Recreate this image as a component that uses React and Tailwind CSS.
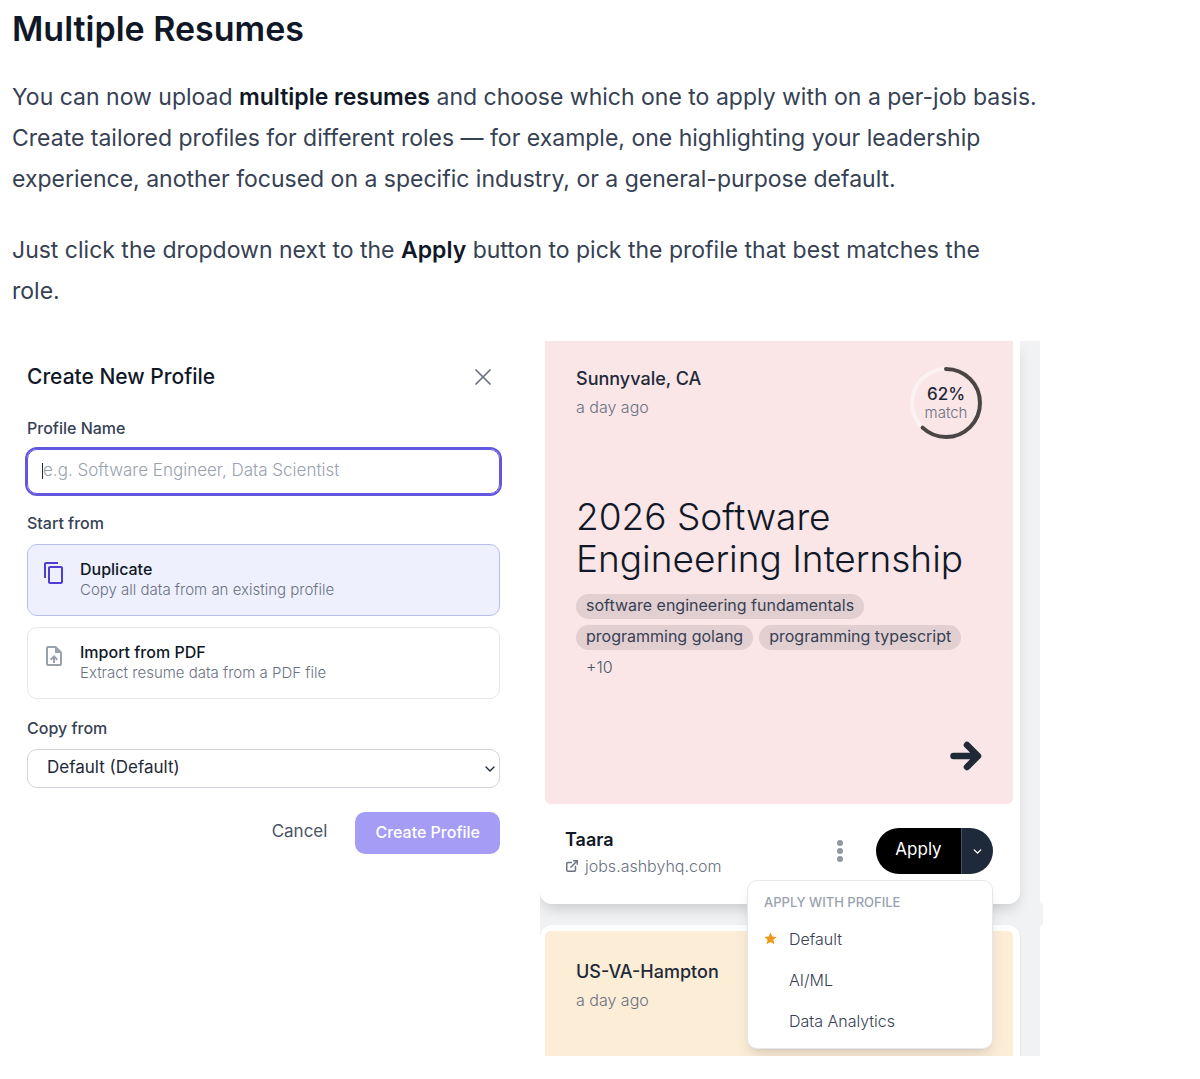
import React, { useState } from 'react';
import { X, ChevronDown, ExternalLink } from 'lucide-react';
import { MdContentCopy, MdOutlineUploadFile } from 'react-icons/md';

const profiles = ['Default', 'AI/ML', 'Data Analytics'];
const skills = ['software engineering fundamentals', 'programming golang', 'programming typescript'];

const OptionCard = ({ icon, title, text, active, onClick }) => (
  <button
    type="button"
    aria-pressed={active}
    onClick={onClick}
    className={`flex w-full items-start gap-[14px] rounded-[10px] border px-[14px] pt-[13px] pb-[15px] text-left ${active ? 'border-[#b9bdf0] bg-[#eef0fd]' : 'border-gray-200 bg-white'}`}
  >
    <span className={`mt-[3px] ${active ? 'text-[#4f3fd0]' : 'text-gray-400'}`}>{icon}</span>
    <span className="flex flex-col">
      <span className="text-[16px] leading-[22px] font-medium text-gray-900">{title}</span>
      <span className="text-[15px] leading-5 font-light text-gray-500">{text}</span>
    </span>
  </button>
);

const CreateProfileForm = () => {
  const [name, setName] = useState('');
  const [source, setSource] = useState('duplicate');

  return (
    <form className="px-[15px] pt-[22px]" onSubmit={(e) => e.preventDefault()}>
      <div className="flex items-center justify-between pr-[3px]">
        <h2 className="text-[21px] leading-7 font-medium text-gray-900">Create New Profile</h2>
        <button type="button" aria-label="Close" className="text-gray-500">
          <X size={28} strokeWidth={1.5} />
        </button>
      </div>

      <label htmlFor="profile-name" className="mt-[25px] block text-[16px] leading-6 font-medium text-gray-700">
        Profile Name
      </label>
      <div className="relative mt-[9px]">
        <input
          id="profile-name"
          type="text"
          value={name}
          onChange={(e) => setName(e.target.value)}
          placeholder="e.g. Software Engineer, Data Scientist"
          className="block h-[45px] w-full rounded-[10px] border border-[#6357e0] px-[15px] pb-1 text-[17px] font-light text-gray-800 ring-2 ring-[#6357e0] outline-none placeholder:text-gray-400"
        />
        {!name && <span className="pointer-events-none absolute top-[14px] left-[15px] h-4 w-px bg-gray-800" />}
      </div>

      <p className="mt-[17px] text-[16px] leading-6 font-medium text-gray-700">Start from</p>
      <div className="mt-[9px] flex flex-col gap-[11px]">
        <OptionCard
          icon={<MdContentCopy size={24} />}
          title="Duplicate"
          text="Copy all data from an existing profile"
          active={source === 'duplicate'}
          onClick={() => setSource('duplicate')}
        />
        <OptionCard
          icon={<MdOutlineUploadFile size={24} />}
          title="Import from PDF"
          text="Extract resume data from a PDF file"
          active={source === 'pdf'}
          onClick={() => setSource('pdf')}
        />
      </div>

      <label htmlFor="copy-from" className="mt-[17px] block text-[16px] leading-6 font-medium text-gray-700">
        Copy from
      </label>
      <div className="relative mt-[9px]">
        <select
          id="copy-from"
          className="block h-[39px] w-full appearance-none rounded-[10px] border border-gray-300 bg-white px-[19px] pb-[2px] text-[17px] text-gray-800"
        >
          <option>Default (Default)</option>
        </select>
        <ChevronDown size={16} className="pointer-events-none absolute top-3 right-[2px] text-gray-800" />
      </div>

      <div className="mt-6 flex items-center justify-end gap-7">
        <button type="button" className="pb-[2px] text-[17px] text-gray-600">Cancel</button>
        <button type="submit" className="h-[42px] rounded-[10px] bg-[#a59cf5] px-5 pb-[2px] text-[16px] font-medium text-white">
          Create Profile
        </button>
      </div>
    </form>
  );
};

const MatchRing = ({ percent }) => {
  const length = 2 * Math.PI * 34;
  return (
    <div className="relative size-[72px]">
      <svg viewBox="0 0 72 72" className="size-full -rotate-90" fill="none" strokeWidth="4">
        <circle cx="36" cy="36" r="34" stroke="#ffffff" strokeOpacity="0.5" />
        <circle
          cx="36"
          cy="36"
          r="34"
          stroke="#4b4645"
          strokeLinecap="round"
          strokeDasharray={`${(length * percent) / 100} ${length}`}
        />
      </svg>
      <div className="absolute inset-0 flex flex-col items-center justify-center">
        <span className="text-[17px] leading-5 font-medium text-gray-800">{percent}%</span>
        <span className="text-[15px] leading-[18px] font-light text-gray-500">match</span>
      </div>
    </div>
  );
};

const Place = ({ name, when }) => (
  <div>
    <p className="text-[18px] leading-6 font-medium text-gray-800">{name}</p>
    <p className="mt-1 text-[16px] leading-6 font-light text-gray-500">{when}</p>
  </div>
);

const ApplyMenu = () => (
  <div className="absolute top-full right-0 mt-[6px] w-[246px] rounded-[10px] border border-gray-200 bg-white pt-[9px] pb-[7px] shadow-lg">
    <p className="px-4 text-[13px] leading-6 font-medium text-gray-400">APPLY WITH PROFILE</p>
    <ul className="mt-1">
      {profiles.map((p, i) => (
        <li key={p}>
          <button type="button" className="flex h-[41px] w-full items-center gap-3 px-4 text-[16px] font-light text-gray-700">
            <span className="flex w-[13px] justify-center">
              {i === 0 && (
                <svg viewBox="0 0 24 24" className="size-[13px] shrink-0" fill="#eb9a1c">
                  <path d="M12 .8l3.300 7.600 8.300.7-6.300 5.400 1.900 8.100L12 18.300l-7.200 4.300 1.900-8.100L.4 9.100l8.300-.7z" />
                </svg>
              )}
            </span>
            {p}
          </button>
        </li>
      ))}
    </ul>
  </div>
);

const JobCard = () => (
  <article className="relative z-10 rounded-b-xl bg-white pr-[7px] pl-[5px] shadow-[0_8px_14px_-3px_rgba(0,0,0,0.16)]">
    <div className="rounded-b-md bg-[#fae5e7] px-[31px] pt-[26px] pb-[33px]">
      <div className="flex items-start justify-between">
        <Place name="Sunnyvale, CA" when="a day ago" />
        <MatchRing percent={62} />
      </div>
      <h3 className="mt-[57px] text-[37px] leading-[42px] font-light text-gray-900">
        2026 Software Engineering Internship
      </h3>
      <div className="mt-[14px] flex flex-wrap gap-[6px] text-[16px] leading-[23px]">
        {skills.map((s) => (
          <span key={s} className="h-[25px] rounded-full bg-[#e2cfd2] px-[10px] text-gray-700">{s}</span>
        ))}
        <span className="h-[25px] px-[10px] font-light text-gray-600">+10</span>
      </div>
      <div className="mt-[60px] flex justify-end">
        <button type="button" aria-label="Open job">
          <svg viewBox="0 0 32 30" className="h-[30px] w-8" fill="none" stroke="#1f2937" strokeWidth="6.500" strokeLinecap="round" strokeLinejoin="round">
            <path d="M3.500 15H27M17 4l11 11-11 11" />
          </svg>
        </button>
      </div>
    </div>

    <div className="flex items-start justify-between pt-6 pr-5 pb-[26px] pl-5">
      <div>
        <p className="text-[18px] leading-6 font-semibold text-gray-900">Taara</p>
        <a href="#jobs" className="mt-[2px] flex items-center gap-[6px] text-[16px] leading-6 font-light text-gray-500">
          <ExternalLink size={14} strokeWidth={2.5} />
          jobs.ashbyhq.com
        </a>
      </div>
      <div className="flex items-center gap-[33px]">
        <button type="button" aria-label="More actions">
          <svg viewBox="0 0 6 22" className="h-[22px] w-[6px]" fill="#9297a0">
            <circle cx="3" cy="3" r="3" />
            <circle cx="3" cy="11" r="3" />
            <circle cx="3" cy="19" r="3" />
          </svg>
        </button>
        <div className="relative flex h-[46px]">
          <button type="button" className="w-[85px] rounded-l-full bg-black pb-[2px] text-[17px] text-white">Apply</button>
          <button type="button" aria-label="Choose profile" className="flex w-8 items-center justify-center rounded-r-full border-l border-gray-600 bg-gray-800 text-white">
            <ChevronDown size={13} strokeWidth={2.5} />
          </button>
          <ApplyMenu />
        </div>
      </div>
    </div>
  </article>
);

const JobFeed = () => (
  <section className="flex gap-5 overflow-hidden bg-[#f1f2f4]">
    <div className="flex flex-1 flex-col gap-[21px]">
      <JobCard />
      <article className="rounded-t-xl bg-white pt-[6px] pr-[7px] pl-[5px] shadow-sm">
        <div className="h-[125px] rounded-t-md bg-[#fcedd7] px-[31px] pt-[29px]">
          <Place name="US-VA-Hampton" when="a day ago" />
        </div>
      </article>
    </div>
    {/* edge of the next column */}
    <div className="flex w-[3px] flex-col gap-[21px]">
      <div className="flex-1 rounded-bl-[3px] bg-white" />
      <div className="h-[131px] rounded-tl-[3px] bg-white" />
    </div>
  </section>
);

export default function App() {
  return (
    <main className="bg-white px-3 pt-[9px] pb-6 font-[Inter,sans-serif]">
      <h1 className="text-[34px] leading-10 font-semibold text-gray-900">Multiple Resumes</h1>
      <div className="mt-7 flex flex-col gap-[30px] text-[23px] leading-[41px] text-gray-700">
        <p className="max-w-[1036px]">
          You can now upload <strong className="font-semibold text-gray-900">multiple resumes</strong> and choose which one to
          apply with on a per-job basis. Create tailored profiles for different roles — for example, one highlighting your
          leadership experience, another focused on a specific industry, or a general-purpose default.
        </p>
        <p className="max-w-[1010px]">
          Just click the dropdown next to the <strong className="font-semibold text-gray-900">Apply</strong> button to pick
          the profile that best matches the role.
        </p>
      </div>
      <div className="mt-[29px] grid max-w-[1031px] grid-cols-2 gap-[25px]">
        <CreateProfileForm />
        <JobFeed />
      </div>
    </main>
  );
}
